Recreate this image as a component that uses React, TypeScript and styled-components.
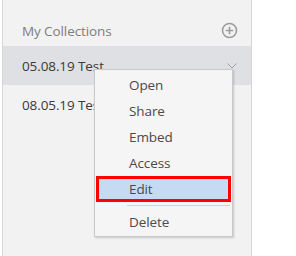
import React from "react";
import styled, { createGlobalStyle } from "styled-components";

const Global = createGlobalStyle`
  html, body { margin: 0; padding: 0; background: #ffffff; }
  body { font-family: "Open Sans", "Noto Sans", sans-serif; }
`;

const Page = styled.div`
  width: 296px;
  height: 256px;
  padding-left: 2px;
  box-sizing: border-box;
  display: flex;
  overflow: hidden;
`;

const Sidebar = styled.aside`
  position: relative;
  width: 250px;
  height: 256px;
  box-sizing: border-box;
  background: #f2f2f2;
  border-left: 1px solid #d6d6d6;
  border-right: 1px solid #d6d6d6;
  display: flex;
  flex-direction: column;
`;

const Header = styled.div`
  height: 46px;
  box-sizing: border-box;
  padding: 18px 13px 3px 19px;
  display: flex;
  align-items: center;
  justify-content: space-between;
`;

const Title = styled.span`
  font-size: 13.5px;
  color: #7d7d7d;
  letter-spacing: -0.1px;
`;

const Row = styled.div<{ $active?: boolean }>`
  height: 39px;
  box-sizing: border-box;
  padding: 0 14px 0 19px;
  display: flex;
  align-items: center;
  justify-content: space-between;
  background: ${(p) => (p.$active ? "#dee0e3" : "transparent")};
  font-size: 13.5px;
  color: #3a3a3a;
  letter-spacing: -0.1px;
`;

const Menu = styled.div`
  position: absolute;
  left: 91px;
  top: 69px;
  width: 139px;
  box-sizing: border-box;
  background: #f5f5f5;
  border: 1px solid #c9c9c9;
  box-shadow: 1px 1px 2px rgba(0, 0, 0, 0.18);
  padding: 2px 1px 1px 0;
  display: flex;
  flex-direction: column;
`;

const Item = styled.div<{ $selected?: boolean }>`
  height: 26px;
  box-sizing: border-box;
  display: flex;
  align-items: center;
  padding-left: ${(p) => (p.$selected ? "30px" : "34px")};
  margin-left: ${(p) => (p.$selected ? "1px" : "0")};
  font-size: 13.5px;
  color: #4a4a4a;
  letter-spacing: -0.1px;
  background: ${(p) => (p.$selected ? "#c6dbf3" : "transparent")};
  border: ${(p) => (p.$selected ? "3px solid #ff0000" : "none")};
`;

const Separator = styled.div`
  height: 1px;
  background: #d2d2d2;
  margin: 3px 1px 3px 32px;
`;

const PlusIcon = () => (
  <svg width="17" height="17" viewBox="0 0 17 17">
    <circle cx="8.5" cy="8.5" r="7" fill="none" stroke="#9c9c9c" strokeWidth="1.6" />
    <path d="M8.5 4.8v7.4M4.8 8.5h7.4" stroke="#9c9c9c" strokeWidth="1.6" />
  </svg>
);

const Chevron = () => (
  <svg width="10" height="6" viewBox="0 0 10 6">
    <path d="M0.5 0.5L5 5L9.5 0.5" fill="none" stroke="#a0a0a0" strokeWidth="1" />
  </svg>
);

export default function App() {
  return (
    <>
      <Global />
      <Page>
        <Sidebar>
          <Header>
            <Title>My Collections</Title>
            <PlusIcon />
          </Header>
          <Row $active>
            <span>05.08.19 Test</span>
            <Chevron />
          </Row>
          <Row>
            <span>08.05.19 Test</span>
          </Row>
          <Menu>
            <Item>Open</Item>
            <Item>Share</Item>
            <Item>Embed</Item>
            <Item>Access</Item>
            <Item $selected>Edit</Item>
            <Separator />
            <Item>Delete</Item>
          </Menu>
        </Sidebar>
      </Page>
    </>
  );
}
